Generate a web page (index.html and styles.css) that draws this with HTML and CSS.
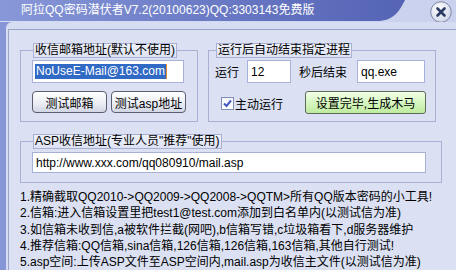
FILE: index.html
```html
<!DOCTYPE html>
<html lang="zh-CN">
<head>
    <meta charset="UTF-8">
    <title>阿拉QQ密码潜伏者</title>
    <link rel="stylesheet" href="styles.css">
</head>
<body>
    <div class="window">
        <div class="titlebar">
            <div class="title">阿拉QQ密码潜伏者V7.2(20100623)QQ:3303143免费版</div>
            <div class="close">
                <svg width="22" height="22" viewBox="0 0 22 22">
                    <defs>
                        <radialGradient id="cg" cx="40%" cy="35%" r="70%">
                            <stop offset="0" stop-color="#ffffff"/>
                            <stop offset="1" stop-color="#cfd5e6"/>
                        </radialGradient>
                    </defs>
                    <circle cx="11" cy="11" r="10.3" fill="url(#cg)" stroke="#7f88a6" stroke-width="1"/>
                    <path d="M7.5 7.5 L14.5 14.5 M14.5 7.5 L7.5 14.5" stroke="#2b3b66" stroke-width="2.6" stroke-linecap="round"/>
                </svg>
            </div>
        </div>
        <div class="main">
            <div class="panel">
                <div class="content">
                    <div class="groups">
                        <fieldset class="group mail">
                            <legend>收信邮箱地址(默认不使用)</legend>
                            <div class="field email"><span class="sel">NoUseE-Mail@163.com</span><span class="caret"></span></div>
                            <div class="buttons">
                                <button class="btn">测试邮箱</button>
                                <button class="btn">测试asp地址</button>
                            </div>
                        </fieldset>
                        <fieldset class="group proc">
                            <legend>运行后自动结束指定进程</legend>
                            <div class="row">
                                <span class="lbl run">运行</span>
                                <input class="field secs" value="12">
                                <span class="lbl end">秒后结束</span>
                                <input class="field exe" value="qq.exe">
                            </div>
                            <div class="row second">
                                <label class="check">
                                    <span class="box">
                                        <svg width="11" height="11" viewBox="0 0 11 11"><path d="M2 5.5 L4.5 8 L9 2.5" fill="none" stroke="#4657c2" stroke-width="2"/></svg>
                                    </span>主动运行
                                </label>
                                <button class="btn green">设置完毕,生成木马</button>
                            </div>
                        </fieldset>
                    </div>
                    <fieldset class="group asp">
                        <legend>ASP收信地址(专业人员"推荐"使用)</legend>
                        <input class="field url" value="http://www.xxx.com/qq080910/mail.asp">
                    </fieldset>
                    <div class="notes">
                        <div>1.精确截取QQ2010-&gt;QQ2009-&gt;QQ2008-&gt;QQTM&gt;所有QQ版本密码的小工具!</div>
                        <div>2.信箱:进入信箱设置里把test1@test.com添加到白名单内(以测试信为准)</div>
                        <div>3.如信箱未收到信,a被软件拦截(网吧),b信箱写错,c垃圾箱看下,d服务器维护</div>
                        <div>4.推荐信箱:QQ信箱,sina信箱,126信箱,126信箱,163信箱,其他自行测试!</div>
                        <div>5.asp空间:上传ASP文件至ASP空间内,mail.asp为收信主文件(以测试信为准)</div>
                    </div>
                </div>
            </div>
        </div>
    </div>
</body>
</html>
```

FILE: styles.css
```css
* {
    box-sizing: border-box;
}
body {
    margin: 0;
    font-family: "Liberation Sans", "Noto Sans CJK SC", sans-serif;
    font-size: 12px;
    color: #000;
}
.window {
    width: 456px;
    height: 270px;
    display: flex;
    flex-direction: column;
    overflow: hidden;
    background: #d3d9f0;
}
.titlebar {
    height: 22px;
    display: flex;
    background: linear-gradient(90deg, #d6dcf2, #c9d1ee);
}
.title {
    width: 406px;
    height: 22px;
    padding-left: 21px;
    line-height: 20px;
    color: #fff;
    background: linear-gradient(90deg, #8898d8, #6b7bc6 50%, #5463b4);
    clip-path: path('M0 0 H405 C399 12 393 21 377 21 H0 Z');
}
.close {
    width: 22px;
    height: 22px;
    margin: 1px 4px 0 auto;

    svg {
        display: block;
    }
}
.main {
    flex: 1;
    display: flex;
    padding-left: 6px;
    background: #8595d6;
}
.panel {
    flex: 1;
    display: flex;
    padding: 7px 0 0 2px;
    background: #d6dcf1;
    border-top-left-radius: 6px;
}
.content {
    flex: 1;
    padding: 13px 0 0 11px;
    background: #dbe1f3;
    border-top: 1px solid #9ba5ca;
    border-left: 1px solid #9ba5ca;
}
.groups {
    display: flex;
    gap: 10px;
}
.group {
    margin: 0;
    padding: 0;
    min-width: 0;
    border: 1px solid #a8b0d4;

    legend {
        margin-left: 1px;
        padding: 0 1px;
        line-height: 13px;
        border: 1px solid #a8b0d4;
        background: linear-gradient(#eef1fa, #dde2f4);
        white-space: nowrap;
    }
}
.field {
    display: block;
    height: 23px;
    padding: 0 3px;
    font: inherit;
    color: #000;
    background: #fff;
    border: 1px solid #a6b2da;
    outline: none;
}
.btn {
    height: 22px;
    padding: 0;
    font: inherit;
    color: #000;
    border: 1px solid #5a5e6e;
    border-radius: 4px;
    background: linear-gradient(#ffffff, #eceef5 55%, #d2d6e4);
}
.mail {
    width: 178px;
    height: 79px;
    padding: 2px 0 0 11px;

    .email {
        width: 152px;
        display: flex;
        align-items: center;
        padding-left: 2px;
    }
    .sel {
        line-height: 15px;
        padding: 0 1px;
        color: #fff;
        background: #316ac5;
    }
    .caret {
        width: 1px;
        height: 15px;
        background: #e08a2c;
    }
    .buttons {
        display: flex;
        gap: 4px;
        margin-top: 8px;
    }
    .btn {
        width: 75px;
    }
}
.proc {
    width: 228px;
    height: 79px;
    padding: 2px 0 0 6px;

    .row {
        display: flex;
        align-items: center;
    }
    .lbl.run {
        width: 32px;
    }
    .lbl.end {
        width: 58px;
        margin-left: 8px;
    }
    .secs {
        width: 44px;
    }
    .exe {
        width: 68px;
    }
    .second {
        margin-top: 8px;
    }
}
.check {
    display: flex;
    align-items: center;
    margin: 2px 0 0 6px;

    .box {
        width: 13px;
        height: 13px;
        margin-right: 1px;
        padding: 0;
        border: 1px solid #7f8fb9;
        background: linear-gradient(#f4f6fb, #ffffff);

        svg {
            display: block;
        }
    }
}
.btn.green {
    width: 121px;
    height: 23px;
    margin-left: 22px;
    border-color: #5d6b58;
    border-radius: 3px;
    background: linear-gradient(#f3ffe8, #d6f6c0 50%, #bfeb9f);
}
.asp {
    width: 422px;
    height: 49px;
    margin-top: 12px;
    padding: 3px 0 0 11px;

    .url {
        width: 394px;
        height: 21px;
    }
}
.notes {
    margin-top: 6px;
    line-height: 16.3px;
    white-space: nowrap;
}
```
